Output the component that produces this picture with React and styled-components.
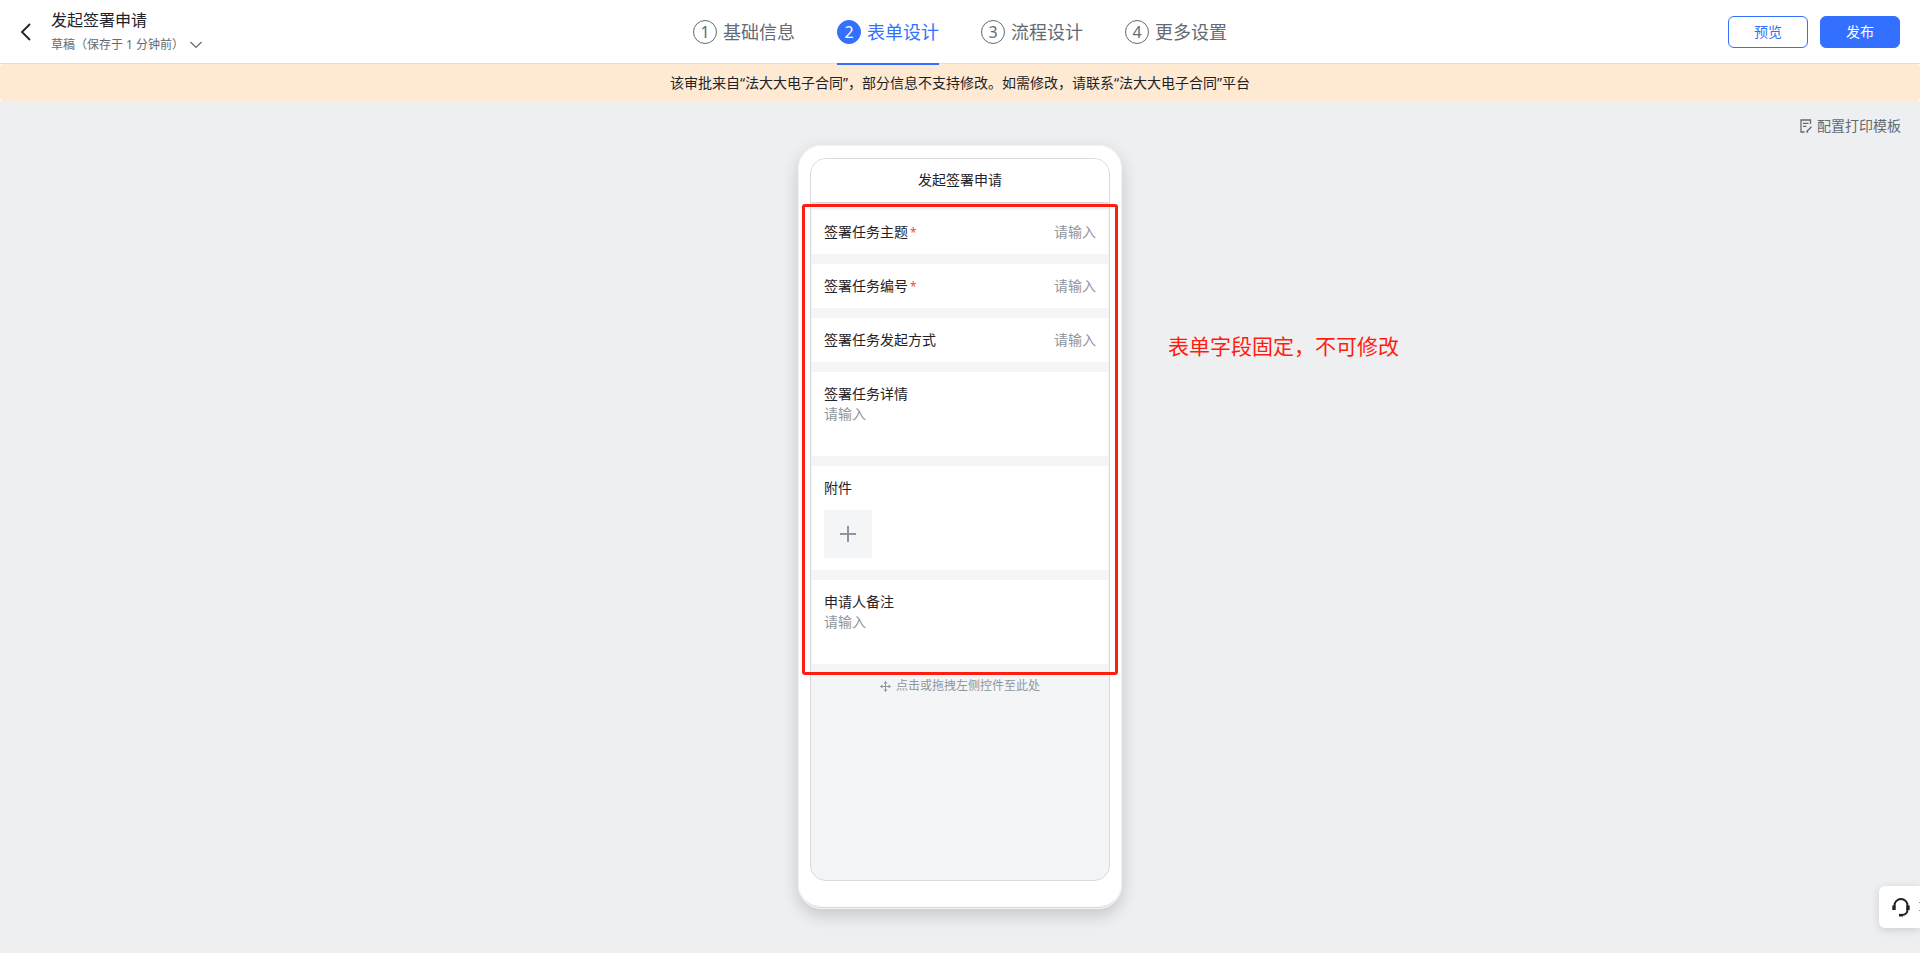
import { useState } from "react"
import styled, { createGlobalStyle } from "styled-components"

const steps = ["基础信息", "表单设计", "流程设计", "更多设置"]

const fields = [
    { id: "subject", label: "签署任务主题", type: "line", required: true },
    { id: "number", label: "签署任务编号", type: "line", required: true },
    { id: "method", label: "签署任务发起方式", type: "line" },
    { id: "detail", label: "签署任务详情", type: "area" },
    { id: "attachment", label: "附件", type: "file" },
    { id: "remark", label: "申请人备注", type: "area" },
]

function Field({ id, label, type, required }) {
    if (type === "file") {
        return (
            <FieldCard>
                <FieldLabel as="p">{label}</FieldLabel>
                <UploadButton type="button" aria-label={label}>
                    <svg width="16" height="16" viewBox="0 0 16 16" stroke="#8f959e" strokeWidth="2">
                        <path d="M8 0v16M0 8h16" />
                    </svg>
                </UploadButton>
            </FieldCard>
        )
    }

    return (
        <FieldCard $inline={type === "line"}>
            <FieldLabel htmlFor={id}>
                {label}
                {required && <Required>*</Required>}
            </FieldLabel>
            {type === "line" ? (
                <LineInput id={id} placeholder="请输入" />
            ) : (
                <AreaInput id={id} placeholder="请输入" />
            )}
        </FieldCard>
    )
}

export default function App() {
    const [current, setCurrent] = useState(1)

    return (
        <Page>
            <GlobalStyle />
            <Header>
                <HeaderLeft>
                    <IconButton type="button" aria-label="返回">
                        <svg width="11" height="18" viewBox="0 0 11 18" fill="none" stroke="#1f2329" strokeWidth="1.8">
                            <path d="M10 1L2 9L10 17" />
                        </svg>
                    </IconButton>
                    <div>
                        <Title>发起签署申请</Title>
                        <DraftButton type="button">
                            草稿（保存于 1 分钟前）
                            <svg width="12" height="8" viewBox="0 0 12 8" fill="none" stroke="#646a73" strokeWidth="1.2">
                                <path d="M0.5 1L6 6.5L11.5 1" />
                            </svg>
                        </DraftButton>
                    </div>
                </HeaderLeft>
                <Steps>
                    {steps.map((step, index) => (
                        <Step key={step} type="button" $active={index === current} onClick={() => setCurrent(index)}>
                            <StepNumber $active={index === current}>{index + 1}</StepNumber>
                            {step}
                        </Step>
                    ))}
                </Steps>
                <HeaderActions>
                    <ActionButton type="button">预览</ActionButton>
                    <ActionButton type="button" $primary>发布</ActionButton>
                </HeaderActions>
            </Header>
            <BannerWrap>
                <Banner>该审批来自“法大大电子合同”，部分信息不支持修改。如需修改，请联系“法大大电子合同”平台</Banner>
            </BannerWrap>
            <Toolbar>
                <PrintButton type="button">
                    <svg width="12" height="14" viewBox="0 0 12 14" fill="none" stroke="#646a73" strokeWidth="1.3">
                        <path d="M10.5 5V1H1v12h3.5M3 4.3h5.5M3 7.3h3.5M6.5 12.8l5-5M6.5 13h1.6" />
                    </svg>
                    配置打印模板
                </PrintButton>
            </Toolbar>
            <Main>
                <Phone>
                    <Screen>
                        <ScreenTitle>发起签署申请</ScreenTitle>
                        <FieldList>
                            {fields.map((field) => (
                                <Field key={field.id} {...field} />
                            ))}
                        </FieldList>
                        <DropHint>
                            <svg width="11" height="11" viewBox="0 0 11 11" fill="#8f959e" stroke="#8f959e">
                                <path d="M5.5 1.5v8M1.5 5.5h8" />
                                <path stroke="none" d="M5.5 0l2 2.4h-4zM5.5 11l-2-2.4h4zM0 5.5l2.4-2v4zM11 5.5l-2.4 2v-4z" />
                            </svg>
                            点击或拖拽左侧控件至此处
                        </DropHint>
                    </Screen>
                    <Highlight />
                    <Note>表单字段固定，不可修改</Note>
                </Phone>
            </Main>
            <Support type="button" aria-label="客服">
                <svg width="18" height="19" viewBox="0 0 18 19" fill="none" stroke="#1f2329" strokeWidth="2">
                    <path d="M2.5 8.5V7.5a6.5 6.5 0 0 1 13 0v4c0 3.5-2 5.5-6 5.5" />
                    <path d="M2 7.5v4.5M16 7.5v4.5" strokeWidth="3.4" />
                    <path d="M7 17.2h4" strokeWidth="2.6" />
                </svg>
                <svg width="1" height="10" viewBox="0 0 1 10" fill="#8f959e">
                    <path d="M0 0h1v1H0zM0 8h1v1H0z" />
                </svg>
            </Support>
        </Page>
    )
}

const GlobalStyle = createGlobalStyle`
    * {
        box-sizing: border-box;
        margin: 0;
        padding: 0;
    }
    body {
        background-color: #eeeff1;
    }
    body, button, input, textarea {
        font-family: "Noto Sans", "Noto Sans CJK SC", sans-serif;
        font-size: 14px;
        line-height: 20px;
        color: #1f2329;
    }
    button {
        border: none;
        background: none;
        cursor: pointer;
    }
`

const Page = styled.div`
    min-height: 100vh;
    overflow-x: hidden;
`

const Header = styled.header`
    height: 64px;
    padding: 0 20px;
    display: grid;
    grid-template-columns: 1fr auto 1fr;
    align-items: center;
    background-color: #ffffff;
    box-shadow: inset 0 -1px 0 #dee0e3;
`

const HeaderLeft = styled.div`
    display: flex;
    align-items: center;
    gap: 20px;
`

const IconButton = styled.button`
    display: flex;
`

const Title = styled.h1`
    font-size: 16px;
    line-height: 26px;
    font-weight: 400;
`

const DraftButton = styled.button`
    display: flex;
    align-items: center;
    gap: 6px;
    font-size: 12px;
    line-height: 24px;
    color: #646a73;
`

const Steps = styled.nav`
    display: flex;
    gap: 42px;
    height: 64px;
`

const Step = styled.button`
    height: 65px;
    padding-top: 1px;
    display: flex;
    align-items: center;
    gap: 6px;
    font-size: 18px;
    color: ${(props) => (props.$active ? "#3370ff" : "#646a73")};
    border-bottom: 2px solid ${(props) => (props.$active ? "#3370ff" : "transparent")};
    position: relative;
    z-index: 1;
`

const StepNumber = styled.span`
    width: 24px;
    height: 24px;
    display: flex;
    align-items: center;
    justify-content: center;
    border: 1px solid ${(props) => (props.$active ? "#3370ff" : "#646a73")};
    border-radius: 50%;
    font-size: 16px;
    color: ${(props) => (props.$active ? "#ffffff" : "#646a73")};
    background-color: ${(props) => (props.$active ? "#3370ff" : "transparent")};
`

const HeaderActions = styled.div`
    display: flex;
    justify-content: flex-end;
    gap: 12px;
`

const ActionButton = styled.button`
    width: 80px;
    height: 32px;
    border: 1px solid #3370ff;
    border-radius: 6px;
    color: ${(props) => (props.$primary ? "#ffffff" : "#3370ff")};
    background-color: ${(props) => (props.$primary ? "#3370ff" : "#ffffff")};
`

const BannerWrap = styled.div`
    background-color: #ffffff;
`

const Banner = styled.p`
    padding: 9px 16px 8px;
    border-radius: 4px;
    text-align: center;
    background-color: #feead2;
`

const Toolbar = styled.div`
    padding: 15px 19px 0;
    display: flex;
    justify-content: flex-end;
`

const PrintButton = styled.button`
    display: flex;
    align-items: center;
    gap: 5px;
    color: #646a73;
`

const Main = styled.main`
    padding: 9px 0 40px;
    display: flex;
    justify-content: center;
`

const Phone = styled.section`
    position: relative;
    width: 324px;
    padding: 13px 12px 28px;
    border-radius: 24px;
    background-color: #ffffff;
    box-shadow: inset 0 0 0 1px #f4f5f7, inset 0 -2px 1px #d0d3d9, 0 6px 16px rgba(31, 35, 41, 0.2);
`

const Screen = styled.div`
    min-height: 723px;
    border: 1px solid #d8dadd;
    border-radius: 16px;
    overflow: hidden;
    background-color: #f4f5f7;
`

const ScreenTitle = styled.h2`
    padding: 11px 0 12px;
    font-size: 14px;
    font-weight: 400;
    text-align: center;
    background-color: #ffffff;
    box-shadow: 0 1px 2px rgba(31, 35, 41, 0.2);
`

const FieldList = styled.form`
    padding: 8px 1px 0;
    display: flex;
    flex-direction: column;
    gap: 10px;
`

const FieldCard = styled.div`
    padding: 12px;
    display: flex;
    flex-direction: ${(props) => (props.$inline ? "row" : "column")};
    background-color: #ffffff;
`

const FieldLabel = styled.label`
    flex-shrink: 0;
`

const Required = styled.span`
    margin-left: 2px;
    font-size: 12px;
    line-height: 1;
    color: #f54a45;
`

const LineInput = styled.input`
    flex: 1;
    min-width: 0;
    height: 20px;
    border: none;
    outline: none;
    text-align: right;
    background: none;
    &::placeholder{
        color: #8f959e;
    }
`

const AreaInput = styled.textarea`
    height: 40px;
    border: none;
    outline: none;
    resize: none;
    background: none;
    &::placeholder{
        color: #8f959e;
    }
`

const UploadButton = styled.button`
    width: 48px;
    height: 48px;
    margin-top: 12px;
    display: flex;
    align-items: center;
    justify-content: center;
    background-color: #f4f5f7;
`

const DropHint = styled.p`
    margin-top: 12px;
    display: flex;
    align-items: center;
    justify-content: center;
    gap: 5px;
    font-size: 12px;
    color: #8f959e;
`

const Highlight = styled.div`
    position: absolute;
    top: 59px;
    left: 4px;
    right: 4px;
    height: 471px;
    border: 3px solid #ff1d0f;
    border-radius: 3px;
    pointer-events: none;
`

const Note = styled.p`
    position: absolute;
    top: 187px;
    left: 370px;
    font-size: 21px;
    line-height: 28px;
    white-space: nowrap;
    color: #ff1d0f;
`

const Support = styled.button`
    position: fixed;
    right: 0;
    bottom: 25px;
    height: 42px;
    padding-left: 13px;
    display: flex;
    align-items: center;
    gap: 9px;
    border-radius: 6px 0 0 6px;
    background-color: #ffffff;
    box-shadow: 0 2px 8px rgba(31, 35, 41, 0.16);
`
